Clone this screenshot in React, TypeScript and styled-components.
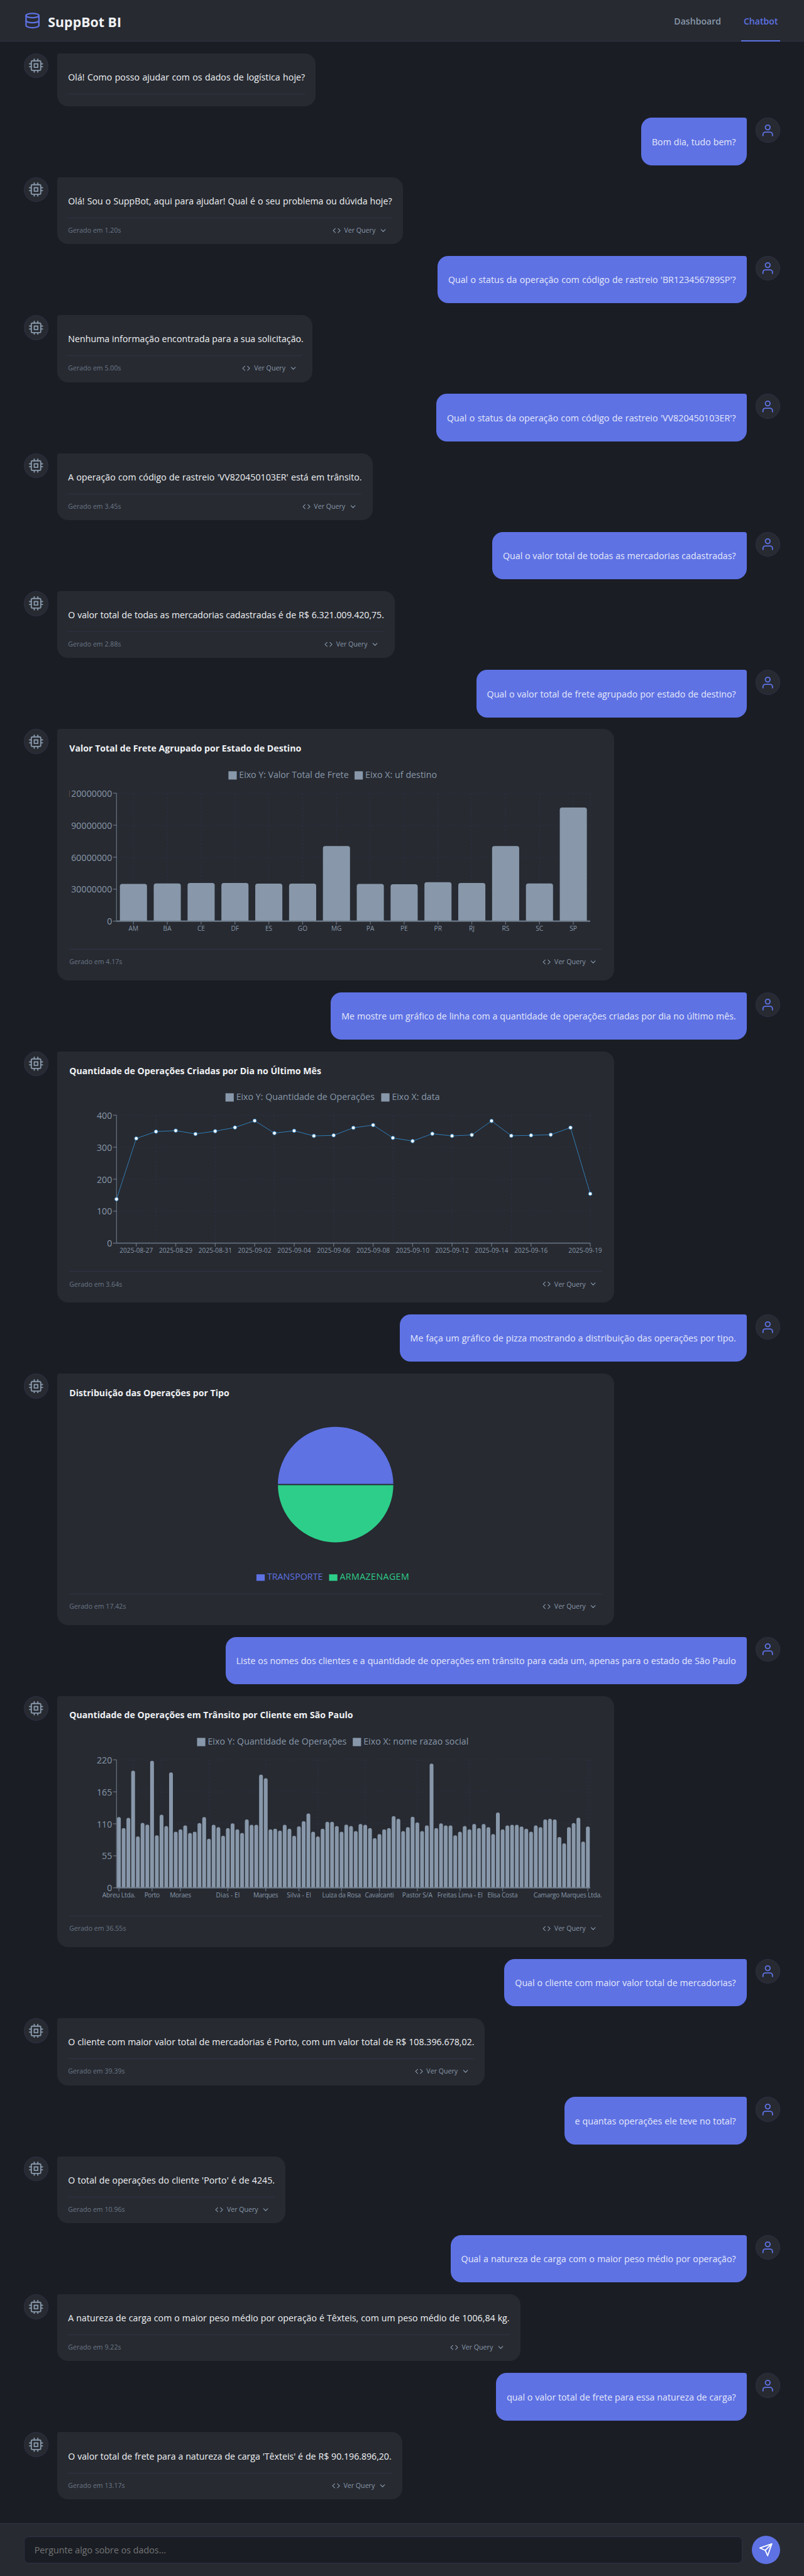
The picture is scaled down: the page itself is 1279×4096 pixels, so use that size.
import React from "react";
import styled, { createGlobalStyle, css } from "styled-components";
import { FiChevronDown, FiCode, FiCpu, FiDatabase, FiSend, FiUser } from "react-icons/fi";

const c = {
  bg: "#1a1d24",
  panel: "#272a31",
  line: "#2f3245",
  primary: "#5e72e4",
  green: "#2dce89",
  muted: "#8898aa",
  text: "#f0f2f5",
  grid: "#2f3245",
  series: "#3182bd",
};

const Global = createGlobalStyle`
  * { box-sizing: border-box; }
  body {
    margin: 0;
    background: ${c.bg};
    color: ${c.text};
    font-family: "Open Sans", "Noto Sans", sans-serif;
    overflow-x: hidden;
  }
`;

const Page = styled.div`
  zoom: 0.942;
  display: flex;
  flex-direction: column;
  height: 4348px;
  background: ${c.bg};
`;

const Header = styled.header`
  display: flex;
  justify-content: space-between;
  height: 70px;
  padding: 0 40px;
  background: ${c.panel};
  border-bottom: 1px solid ${c.line};
`;

const Brand = styled.div`
  display: flex;
  align-items: center;
  gap: 12px;
  color: ${c.primary};
`;

const BrandName = styled.h1`
  margin: 4px 0 0;
  color: ${c.text};
  font-size: 22.7px;
  font-weight: 700;
  white-space: nowrap;
`;

const Nav = styled.nav`
  display: flex;
  gap: 30px;
  height: 70px;
`;

const NavLink = styled.a<{ $active?: boolean }>`
  display: flex;
  align-items: center;
  justify-content: center;
  padding: 3px 4px 0;
  font-size: 15px;
  font-weight: 600;
  white-space: nowrap;
  color: ${(p) => (p.$active ? c.primary : c.muted)};
  border-bottom: 3px solid ${(p) => (p.$active ? c.primary : "transparent")};
`;

const Messages = styled.main`
  flex: 1;
  display: flex;
  flex-direction: column;
  gap: 20px;
  padding: 20px 40px 40px;
`;

const Row = styled.div<{ $user?: boolean }>`
  display: flex;
  flex-direction: ${(p) => (p.$user ? "row-reverse" : "row")};
  align-items: flex-start;
  gap: 15px;
`;

const Avatar = styled.div<{ $user?: boolean }>`
  display: flex;
  flex: none;
  align-items: center;
  justify-content: center;
  width: 42px;
  height: 42px;
  border: 1px solid ${c.line};
  border-radius: 50%;
  background: ${c.panel};
  color: ${(p) => (p.$user ? c.primary : c.muted)};
`;

const bubble = css<{ $width: number }>`
  width: ${(p) => p.$width}px;
  padding: 29px 18px 0;
`;

const UserBubble = styled.div`
  ${bubble}
  height: 80px;
  border-radius: 18px 4px 18px 18px;
  background: ${c.primary};
  color: #e6e9fa;
`;

const BotBubble = styled.div<{ $empty?: boolean }>`
  ${bubble}
  height: ${(p) => (p.$empty ? 89 : 113)}px;
  border-radius: 4px 18px 18px 18px;
  background: ${c.panel};
`;

const MessageText = styled.p<{ $tracking?: number }>`
  margin: 0;
  font-size: 15.1px;
  line-height: 24px;
  letter-spacing: ${(p) => p.$tracking ?? 0}px;
  white-space: nowrap;
  text-align: justify;
  text-align-last: justify;
`;

const ChartCard = styled.section`
  width: 940px;
  height: 424px;
  padding: 0 20px;
  border-radius: 4px 18px 18px 18px;
  background: ${c.panel};
`;

const ChartTitle = styled.h2`
  height: 60px;
  margin: 0;
  padding-top: 21px;
  font-size: 15.05px;
  line-height: 24px;
  font-weight: 700;
  white-space: nowrap;
`;

const ChartSvg = styled.svg`
  display: block;
  width: 900px;
  height: 310px;
  overflow: hidden;
  font-size: 15.1px;
  fill: ${c.muted};
`;

const Footer = styled.footer<{ $gap: number }>`
  display: flex;
  justify-content: space-between;
  align-items: center;
  height: 43px;
  margin-top: ${(p) => p.$gap}px;
  border-top: 1px solid ${c.line};
  color: ${c.muted};
  font-size: 11.3px;
  line-height: 16px;
  white-space: nowrap;
`;

const Elapsed = styled.span`
  opacity: 0.7;
`;

const QueryButton = styled.button`
  display: flex;
  align-items: center;
  gap: 6px;
  padding: 0 8px 0 0;
  border: 0;
  background: none;
  color: inherit;
  font: inherit;
`;

const Composer = styled.form`
  display: flex;
  align-items: center;
  gap: 16px;
  height: 89px;
  padding: 0 40px;
  background: ${c.panel};
  border-top: 1px solid ${c.line};
`;

const Input = styled.input`
  flex: 1;
  height: 46px;
  padding: 0 17px;
  border: 1px solid ${c.line};
  border-radius: 8px;
  background: ${c.bg};
  color: ${c.text};
  font: 15.2px "Open Sans", "Noto Sans", sans-serif;
  &::placeholder { color: #757575; }
`;

const Send = styled.button`
  display: flex;
  align-items: center;
  justify-content: center;
  width: 48px;
  height: 48px;
  padding: 0;
  border: 0;
  border-radius: 50%;
  background: ${c.primary};
  color: #fff;
`;

const LEFT = 80;
const RIGHT = 880;
const TOP = 38;
const BASE = 254;
const VIEW = "0 -10 900 310";

type LegendItem = { x: number; label: string; width: number; color?: string };

function Legend({ items, y = 1, size = 14, baseline = 12.5 }: { items: LegendItem[]; y?: number; size?: number; baseline?: number }) {
  return (
    <>
      {items.map((it) => (
        <g key={it.label} fill={it.color ?? c.muted}>
          <rect x={it.x} y={y} width={14} height={size} />
          <text x={it.x + 18} y={baseline} textLength={it.width}>{it.label}</text>
        </g>
      ))}
    </>
  );
}

function Grid({ xs }: { xs: number[] }) {
  return (
    <g stroke={c.grid} strokeDasharray="3 3">
      {[0, 1, 2, 3, 4].map((i) => (
        <line key={i} x1={LEFT} x2={RIGHT} y1={TOP + i * 54} y2={TOP + i * 54} />
      ))}
      {xs.map((x) => (
        <line key={x} x1={x} x2={x} y1={TOP} y2={BASE} />
      ))}
    </g>
  );
}

type Tick = { x: number; label: string; width?: number; center?: number };

function Axes({ yLabels, ticks }: { yLabels: string[]; ticks: Tick[] }) {
  return (
    <>
      <g stroke={c.muted} strokeOpacity={0.62} strokeWidth={1.4}>
        <line x1={LEFT} x2={LEFT} y1={TOP} y2={BASE} />
        <line x1={LEFT} x2={RIGHT} y1={BASE} y2={BASE} strokeWidth={1.8} />
        {yLabels.map((l, i) => (
          <line key={l} x1={LEFT - 6} x2={LEFT} y1={TOP + i * 54} y2={TOP + i * 54} />
        ))}
        {ticks.map((t) => (
          <line key={t.label} x1={t.x} x2={t.x} y1={BASE} y2={BASE + 6} />
        ))}
      </g>
      <g textAnchor="end">
        {yLabels.map((l, i) => (
          <text key={l} x={LEFT - 7.5} y={TOP + 6 + i * 54}>{l}</text>
        ))}
      </g>
      <g textAnchor="middle" fontSize={10.8}>
        {ticks.map((t) => (
          <text key={t.label} x={t.center ?? t.x} y={BASE + 16} textLength={t.width}>{t.label}</text>
        ))}
      </g>
    </>
  );
}

function Bars({ heights, gap, radius }: { heights: number[]; gap: number; radius: number }) {
  const step = (RIGHT - LEFT) / heights.length;
  const w = step - gap * 2;
  return (
    <g>
      {heights.map((h, i) => {
        const x = LEFT + i * step + gap;
        const y = BASE - h;
        return (
          <path
            key={i}
            d={`M${x},${BASE}V${y + radius}A${radius},${radius} 0 0 1 ${x + radius},${y}H${x + w - radius}A${radius},${radius} 0 0 1 ${x + w},${y + radius}V${BASE}Z`}
          />
        );
      })}
    </g>
  );
}

const states = ["AM", "BA", "CE", "DF", "ES", "GO", "MG", "PA", "PE", "PR", "RJ", "RS", "SC", "SP"];
const freight = [62.7, 63.7, 64.3, 64.3, 63.4, 63.4, 126.7, 62.7, 62.3, 65.7, 64.3, 126.7, 63.7, 191.7];

function FreightChart() {
  const step = 800 / 14;
  const ticks = states.map((label, i) => ({ label, x: LEFT + step * (i + 0.5) }));
  return (
    <ChartSvg viewBox={VIEW}>
      <Legend items={[{ x: 269, label: "Eixo Y: Valor Total de Frete", width: 185 }, { x: 482, label: "Eixo X: uf destino", width: 121 }]} />
      <Grid xs={[...ticks.map((t) => t.x), RIGHT]} />
      <Axes yLabels={["120000000", "90000000", "60000000", "30000000", "0"]} ticks={ticks} />
      <Bars heights={freight} gap={5.7} radius={4} />
      <line x1={LEFT} x2={RIGHT} y1={BASE} y2={BASE} stroke="#6f7c8c" strokeWidth={1.8} />
    </ChartSvg>
  );
}

const daily = [
  141.7, 39.3, 27.7, 26, 31.7, 27, 20.7, 9.3, 30.3, 26.3, 35, 34, 21.3, 16.7, 38.3, 43.7, 31.3, 35, 33.3, 9.7, 34.7, 34,
  33, 21, 132.7,
];

const dayTicks: Tick[] = [
  [1, "2025-08-27"], [3, "2025-08-29"], [5, "2025-08-31"], [7, "2025-09-02"], [9, "2025-09-04"], [11, "2025-09-06"],
  [13, "2025-09-08"], [15, "2025-09-10"], [17, "2025-09-12"], [19, "2025-09-14"], [21, "2025-09-16"], [24, "2025-09-19"],
].map(([i, label]) => {
  const x = LEFT + ((i as number) * 800) / 24;
  return { x, label: label as string, width: 56.5, center: i === 24 ? 871.5 : x };
});

function DailyChart() {
  const pts = daily.map((d, i) => [LEFT + (i * 800) / 24, TOP + d]);
  return (
    <ChartSvg viewBox={VIEW}>
      <Legend items={[{ x: 264, label: "Eixo Y: Quantidade de Operações", width: 234 }, { x: 527, label: "Eixo X: data", width: 81 }]} />
      <Grid xs={[2, 5, 8, 11, 14, 17, 20, 24].map((i) => LEFT + (i * 800) / 24)} />
      <Axes yLabels={["400", "300", "200", "100", "0"]} ticks={dayTicks} />
      <polyline points={pts.map((p) => p.join(",")).join(" ")} fill="none" stroke={c.series} />
      {pts.map(([x, y]) => (
        <circle key={x} cx={x} cy={y} r={3} fill="#fff" stroke={c.series} />
      ))}
    </ChartSvg>
  );
}

function TypeChart() {
  const cx = 450;
  const cy = 117;
  const r = 98.5;
  return (
    <ChartSvg viewBox={VIEW}>
      <g stroke={c.panel} strokeWidth={2}>
        <path d={`M${cx - r},${cy}A${r},${r} 0 0 1 ${cx + r},${cy}Z`} fill={c.primary} />
        <path d={`M${cx - r},${cy}A${r},${r} 0 0 0 ${cx + r},${cy}Z`} fill={c.green} />
      </g>
      <Legend
        y={268.4}
        size={11}
        baseline={278.2}
        items={[
          { x: 316.3, label: "TRANSPORTE", width: 94, color: c.primary },
          { x: 439, label: "ARMAZENAGEM", width: 117, color: c.green },
        ]}
      />
    </ChartSvg>
  );
}

/* Bar tops in thirds of a pixel down from the 220 gridline. */
const clientTops = [
  290, 346, 294, 55, 388, 319, 328, 5, 382, 278, 335, 64, 364, 352, 332, 370, 364, 320, 290, 400, 329, 341, 385, 346, 322,
  352, 370, 302, 329, 329, 75, 93, 352, 349, 358, 329, 349, 385, 337, 311, 272, 364, 388, 349, 314, 314, 335, 364, 328, 335,
  361, 325, 329, 346, 397, 376, 352, 346, 285, 299, 361, 341, 288, 317, 361, 332, 19, 346, 322, 332, 332, 382, 364, 335, 352,
  325, 346, 325, 341, 376, 267, 352, 332, 329, 329, 338, 349, 364, 332, 341, 302, 299, 302, 391, 423, 341, 320, 293, 414, 338,
];

const clientTicks: Tick[] = (
  [
    [0, "Abreu Ltda.", 56], [7, "Porto", 26], [13, "Moraes", 36], [23, "Dias - El", 40], [31, "Marques", 42],
    [38, "Silva - El", 41], [47, "Luiza da Rosa", 65.5], [55, "Cavalcanti", 49], [63, "Pastor S/A", 51],
    [72, "Freitas Lima - El", 76.5], [81, "Elisa Costa", 51], [99, "Camargo Marques Ltda.", 115.5],
  ] as [number, string, number][]
).map(([i, label, width]) => {
  const x = LEFT + i * 8 + 4;
  return { x, label, width, center: i === 99 ? 842 : x };
});

function ClientChart() {
  return (
    <ChartSvg viewBox={VIEW}>
      <Legend items={[{ x: 216, label: "Eixo Y: Quantidade de Operações", width: 234.5 }, { x: 479, label: "Eixo X: nome razao social", width: 177.5 }]} />
      <Grid xs={[...[3, 9, 19, 31, 42, 52, 63, 74, 99].map((i) => LEFT + i * 8 + 4), RIGHT]} />
      <Axes yLabels={["220", "165", "110", "55", "0"]} ticks={clientTicks} />
      <Bars heights={clientTops.map((t) => (648 - t) / 3)} gap={0.8} radius={3.1} />
      <line x1={LEFT} x2={RIGHT} y1={BASE} y2={BASE} stroke="#6f7c8c" strokeWidth={1.8} />
    </ChartSvg>
  );
}

function Meta({ time, gap }: { time?: string; gap: number }) {
  return (
    <Footer $gap={gap}>
      {time && (
        <>
          <Elapsed>Gerado em {time}</Elapsed>
          <QueryButton type="button">
            <FiCode size={14} />
            Ver Query
            <FiChevronDown size={14} />
          </QueryButton>
        </>
      )}
    </Footer>
  );
}

type MessageProps = { width: number; tracking?: number; children: React.ReactNode };

function User({ width, tracking, children }: MessageProps) {
  return (
    <Row $user>
      <Avatar $user><FiUser size={24} /></Avatar>
      <UserBubble $width={width}>
        <MessageText $tracking={tracking}>{children}</MessageText>
      </UserBubble>
    </Row>
  );
}

function Bot({ time, width, tracking, children }: MessageProps & { time?: string }) {
  return (
    <Row>
      <Avatar><FiCpu size={24} /></Avatar>
      <BotBubble $empty={!time} $width={width}>
        <MessageText $tracking={tracking}>{children}</MessageText>
        <Meta time={time} gap={15} />
      </BotBubble>
    </Row>
  );
}

function Chart({ title, time, children }: { title: string; time: string; children: React.ReactNode }) {
  return (
    <Row>
      <Avatar><FiCpu size={24} /></Avatar>
      <ChartCard>
        <ChartTitle>{title}</ChartTitle>
        {children}
        <Meta time={time} gap={1} />
      </ChartCard>
    </Row>
  );
}

export default function App() {
  return (
    <>
      <Global />
      <Page>
        <Header>
          <Brand>
            <FiDatabase size={29} />
            <BrandName>SuppBot BI</BrandName>
          </Brand>
          <Nav>
            <NavLink>Dashboard</NavLink>
            <NavLink $active>Chatbot</NavLink>
          </Nav>
        </Header>
        <Messages>
          <Bot width={436}>Olá! Como posso ajudar com os dados de logística hoje?</Bot>
          <User width={178}>Bom dia, tudo bem?</User>
          <Bot width={583} time="1.20s">Olá! Sou o SuppBot, aqui para ajudar! Qual é o seu problema ou dúvida hoje?</Bot>
          <User width={522}>Qual o status da operação com código de rastreio 'BR123456789SP'?</User>
          <Bot width={431} time="5.00s">Nenhuma informação encontrada para a sua solicitação.</Bot>
          <User width={524} tracking={0.04}>Qual o status da operação com código de rastreio 'VV820450103ER'?</User>
          <Bot width={532} time="3.45s">A operação com código de rastreio 'VV820450103ER' está em trânsito.</Bot>
          <User width={429.5}>Qual o valor total de todas as mercadorias cadastradas?</User>
          <Bot width={569.5} time="2.88s" tracking={-0.06}>O valor total de todas as mercadorias cadastradas é de R$ 6.321.009.420,75.</Bot>
          <User width={456.5}>Qual o valor total de frete agrupado por estado de destino?</User>
          <Chart title="Valor Total de Frete Agrupado por Estado de Destino" time="4.17s"><FreightChart /></Chart>
          <User width={702}>Me mostre um gráfico de linha com a quantidade de operações criadas por dia no último mês.</User>
          <Chart title="Quantidade de Operações Criadas por Dia no Último Mês" time="3.64s"><DailyChart /></Chart>
          <User width={586}>Me faça um gráfico de pizza mostrando a distribuição das operações por tipo.</User>
          <Chart title="Distribuição das Operações por Tipo" time="17.42s"><TypeChart /></Chart>
          <User width={880}>Liste os nomes dos clientes e a quantidade de operações em trânsito para cada um, apenas para o estado de São Paulo</User>
          <Chart title="Quantidade de Operações em Trânsito por Cliente em São Paulo" time="36.55s"><ClientChart /></Chart>
          <User width={409}>Qual o cliente com maior valor total de mercadorias?</User>
          <Bot width={722} time="39.39s">O cliente com maior valor total de mercadorias é Porto, com um valor total de R$ 108.396.678,02.</Bot>
          <User width={308}>e quantas operações ele teve no total?</User>
          <Bot width={385} time="10.96s">O total de operações do cliente 'Porto' é de 4245.</Bot>
          <User width={500}>Qual a natureza de carga com o maior peso médio por operação?</User>
          <Bot width={781.5} time="9.22s">A natureza de carga com o maior peso médio por operação é Têxteis, com um peso médio de 1006,84 kg.</Bot>
          <User width={423}>qual o valor total de frete para essa natureza de carga?</User>
          <Bot width={582} time="13.17s" tracking={-0.05}>O valor total de frete para a natureza de carga 'Têxteis' é de R$ 90.196.896,20.</Bot>
        </Messages>
        <Composer>
          <Input placeholder="Pergunte algo sobre os dados..." />
          <Send type="button"><FiSend size={24} /></Send>
        </Composer>
      </Page>
    </>
  );
}
